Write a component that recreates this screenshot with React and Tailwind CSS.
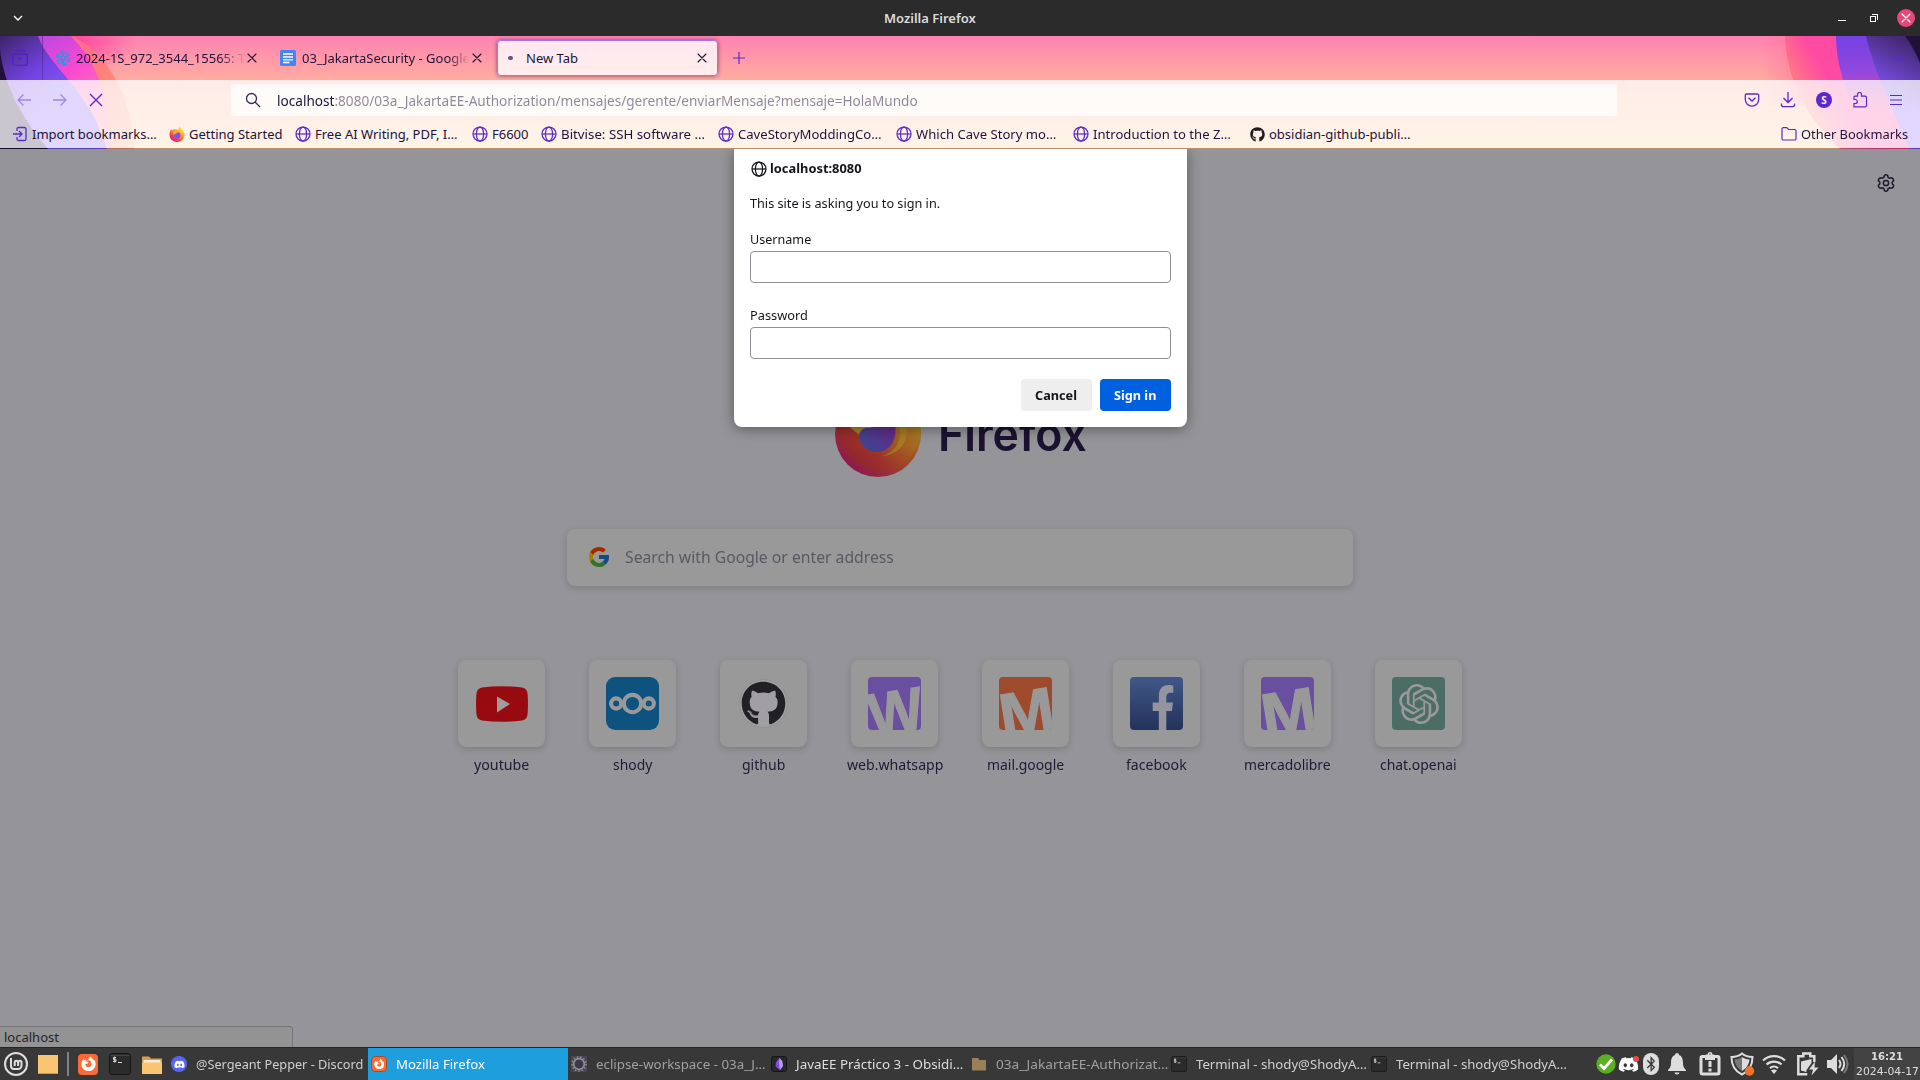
import { useLayoutEffect, useRef, useState } from "react";
import { FaGithub, FaDiscord, FaFacebookF, FaFirefoxBrowser, FaBluetoothB } from "react-icons/fa";
import { FcGoogle } from "react-icons/fc";
import { SiOpenai } from "react-icons/si";

// One line of text condensed or widened to take exactly w pixels.
function Fit({ w, className = "", children }) {
  const ref = useRef(null);
  const [scale, setScale] = useState(1);
  useLayoutEffect(() => {
    setScale(w / ref.current.offsetWidth);
  }, [w]);
  return (
    <span className={"block shrink-0 whitespace-nowrap " + className} style={{ width: w }}>
      <span ref={ref} className="inline-block origin-left" style={{ transform: `scaleX(${scale})` }}>
        {children}
      </span>
    </span>
  );
}

function Globe({ className = "" }) {
  return (
    <svg viewBox="0 0 16 16" className={"size-4 shrink-0 " + className} fill="none" stroke="currentColor" strokeWidth="1.25">
      <circle cx="8" cy="8" r="7" />
      <ellipse cx="8" cy="8" rx="3.6" ry="7" />
      <path d="M1 8h14" />
    </svg>
  );
}

function Cross({ className = "" }) {
  return (
    <svg viewBox="0 0 10 10" className={"shrink-0 " + className} fill="none" stroke="currentColor" strokeWidth="1.1" strokeLinecap="round">
      <path d="M1 1l8 8M9 1l-8 8" />
    </svg>
  );
}

function FirefoxLogo({ className = "" }) {
  return (
    <svg viewBox="0 0 32 32" className={"shrink-0 " + className}>
      <defs>
        <linearGradient id="fx-body" x1="0.85" y1="0.05" x2="0.2" y2="0.95">
          <stop offset="0.05" stopColor="#fff44f" />
          <stop offset="0.4" stopColor="#ffa12c" />
          <stop offset="0.7" stopColor="#ff4a3a" />
          <stop offset="1" stopColor="#e31587" />
        </linearGradient>
        <linearGradient id="fx-core" x1="1" y1="0" x2="0" y2="1">
          <stop offset="0" stopColor="#b833e1" />
          <stop offset="1" stopColor="#5b6df8" />
        </linearGradient>
      </defs>
      <path fill="url(#fx-body)" d="M20 0c3 2 4 4 4.500 6 4.500 3 7 7.500 6.500 13C30 27 23.500 32 16 32S1 26 1 17.500C1 12 3 8 5 5.500c0 1.500.3 2.500 1 3.500 2-2 4-2.500 6-2.500 3 0 5 .5 6 1.500 1.500-2.500 2-5 2-8z" />
      <path fill="url(#fx-core)" d="M9.500 14c2 .5 4.500.5 6-1.500 3-1.500 7.500 1.500 7.500 6 0 4-3 6.800-7 6.800s-7-3-7-6.800c0-2 0-3 .5-4.500z" />
      <path fill="#ffb52e" d="M7 13c2-3 5-3 8-2.500l3 2.500c-3 0-3 2-5 2.500-2 .5-3 1-3.500 2.500z" />
    </svg>
  );
}

// The large, dimmed logo of the new tab page; 86 px wide disc with the globe in its middle.
function PageLogo() {
  return (
    <svg viewBox="0 0 86 86" className="size-[86px] shrink-0">
      <defs>
        <linearGradient id="pl-rim" x1="1" y1="0.1" x2="0.2" y2="1">
          <stop offset="0.1" stopColor="#a18c2f" />
          <stop offset="0.45" stopColor="#a4521f" />
          <stop offset="1" stopColor="#8c1150" />
        </linearGradient>
        <linearGradient id="pl-fur" x1="0.95" y1="0.2" x2="0.25" y2="0.85">
          <stop offset="0" stopColor="#a5902e" />
          <stop offset="0.4" stopColor="#a4661f" />
          <stop offset="0.8" stopColor="#9c3229" />
          <stop offset="1" stopColor="#93272f" />
        </linearGradient>
        <linearGradient id="pl-core" x1="1" y1="0.2" x2="0.2" y2="0.9">
          <stop offset="0" stopColor="#6b2585" />
          <stop offset="1" stopColor="#3e4590" />
        </linearGradient>
      </defs>
      <circle cx="43" cy="43" r="43" fill="url(#pl-rim)" />
      <path fill="url(#pl-fur)" d="M1 30C3 60 22 79 45 79S84 62 86 40C84 15 66 0 43 0S4 14 1 30z" />
      <path fill="#a88425" fillOpacity="0.7" d="M61 28c8 12 5 32-14 37 16-1 26-13 25-27-1-5-4-9-11-10z" />
      <path fill="url(#pl-core)" d="M24 44c0-4 2-7 5-7 6-1 10-3 14-10h15c3 7 3 13 2 18-2 10-9 16-18 16S24 54 24 44z" />
      <path fill="#a5832a" d="M12 32h32c-4 4-7 5-13 5-4 1-6 3-7 7-3-4-8-5-12-12z" />
    </svg>
  );
}

function ThemeArt() {
  return (
    <div className="absolute inset-0 flex justify-between overflow-hidden bg-linear-to-b from-[#ff82b1] via-[#ffad9f] via-40% to-[#ffcd98]">
      <svg width="150" height="113" viewBox="0 36 150 113">
        <defs>
          <linearGradient id="l-orange" x1="0" y1="0" x2="1" y2="1">
            <stop offset="0" stopColor="#ff4fa3" />
            <stop offset="0.6" stopColor="#ff8675" />
            <stop offset="1" stopColor="#ffa27e" />
          </linearGradient>
          <linearGradient id="l-pink" x1="0" y1="0" x2="0.6" y2="1">
            <stop offset="0" stopColor="#9a49e8" />
            <stop offset="0.5" stopColor="#fa48d2" />
            <stop offset="1" stopColor="#ff8f9c" />
          </linearGradient>
          <linearGradient id="l-purple" x1="0" y1="0" x2="0.45" y2="0.6">
            <stop offset="0" stopColor="#3c2467" />
            <stop offset="0.6" stopColor="#7442e2" />
            <stop offset="1" stopColor="#8157f2" />
          </linearGradient>
          <radialGradient id="l-glow">
            <stop offset="0" stopColor="#ff4ba0" />
            <stop offset="1" stopColor="#ff4ba0" stopOpacity="0" />
          </radialGradient>
        </defs>
        <ellipse cx="80" cy="40" rx="56" ry="34" fill="url(#l-glow)" />
        <path fill="url(#l-orange)" d="M0 36H72C102 50 132 90 134 149H0z" />
        <path fill="url(#l-pink)" d="M0 36H71C94 60 112 96 110 149H0z" />
        <path fill="url(#l-purple)" d="M0 36H38C48 66 90 90 107 149H0z" />
        <path fill="#21113a" d="M0 50C5 90 24 120 48 149H0z" />
      </svg>
      <svg width="160" height="113" viewBox="1760 36 160 113">
        <defs>
          <linearGradient id="r-orange" gradientUnits="userSpaceOnUse" x1="1785" y1="90" x2="1832" y2="62">
            <stop offset="0" stopColor="#ff8b78" />
            <stop offset="0.8" stopColor="#ff4aa3" />
          </linearGradient>
          <linearGradient id="r-purple" gradientUnits="userSpaceOnUse" x1="1850" y1="36" x2="1852" y2="110">
            <stop offset="0" stopColor="#7441e5" />
            <stop offset="0.5" stopColor="#9348dd" />
            <stop offset="1" stopColor="#ff4a9e" />
          </linearGradient>
          <linearGradient id="r-dark" gradientUnits="userSpaceOnUse" x1="1880" y1="92" x2="1908" y2="42">
            <stop offset="0" stopColor="#8053f5" />
            <stop offset="1" stopColor="#432873" />
          </linearGradient>
          <linearGradient id="r-haze">
            <stop offset="0" stopColor="#ff6d9b" stopOpacity="0" />
            <stop offset="1" stopColor="#ff6d9b" stopOpacity="0.6" />
          </linearGradient>
        </defs>
        <path fill="url(#r-haze)" d="M1760 36h28v30l16 40h-44z" />
        <path fill="url(#r-orange)" d="M1785 36C1786 80 1808 120 1840 149H1920V36z" />
        <path fill="url(#r-purple)" d="M1836 36C1836 84 1862 120 1878 149H1920V36z" />
        <path fill="url(#r-dark)" d="M1866 36C1872 64 1890 104 1909 149H1920V36z" />
        <path fill="#21113a" d="M1905 36Q1914 48 1920 63V36z" />
      </svg>
    </div>
  );
}

function TitleBar() {
  return (
    <div className="flex h-9 items-center bg-[#2b2b2b] text-white">
      <svg viewBox="0 0 10 8" className="ml-[13px] h-2 w-2.5" fill="none" stroke="currentColor" strokeWidth="1.4"><path d="M1 2l4 4 4-4" /></svg>
      <Fit w={92} className="ml-[861px] pt-px text-[13px] font-semibold text-[#dcdcdc]">Mozilla Firefox</Fit>
      <div className="ml-auto flex items-center pr-[5px]">
        <span className="mt-[5px] h-px w-2 bg-white" />
        <svg viewBox="0 0 8 8" className="ml-6 size-2" fill="none" stroke="currentColor" shapeRendering="crispEdges"><path d="M.5 2.500h5v5h-5zM2 .5h5.500V6" /></svg>
        <span className="ml-[19px] flex size-[18px] items-center justify-center rounded-full bg-[#e7477f]"><Cross className="size-[10px]" /></span>
      </div>
    </div>
  );
}

function TabStrip() {
  return (
    <div className="relative flex h-11 items-center text-[13px] text-[#20123a]">
      <svg viewBox="0 0 16 16" className="ml-3 size-4 text-[#4f22c4]" fill="none" stroke="currentColor" strokeWidth="1.3"><path d="M2.500.8h11M2.500 4h11a1.700 1.700 0 0 1 1.700 1.700v7.600a2 2 0 0 1-2 2H2.800a2 2 0 0 1-2-2V5.700A1.700 1.700 0 0 1 2.500 4z" /><path strokeWidth="2" d="M6 8.500h4" /></svg>
      <span className="ml-[14px] h-11 w-px bg-[#43257f]/50" />
      <svg viewBox="0 0 16 16" className="ml-3 size-4 text-[#1f9be0]" fill="none" stroke="currentColor" strokeWidth="1.200">
        <circle cx="8" cy="8" r="2" /><circle cx="8" cy="8" r="6.800" strokeDasharray="4.500 2.600" />
        <path d="M8 1v5M8 10v5M2 4.500l4.300 2.400M9.800 9.100L14 11.500M2 11.500l4.300-2.400M9.800 6.900L14 4.500M5.500 2.800L8 4.500l2.500-1.700M5.500 13.200L8 11.500l2.500 1.700M2 8l2-1.500M14 8l-2-1.500" />
      </svg>
      <div className="ml-[5px] w-[169px] overflow-hidden mask-r-from-85% mask-r-to-100% pt-px"><Fit w={169}>2024-1S_972_3544_15565: T</Fit></div>
      <Cross className="ml-[2px] size-[10px]" />
      <svg viewBox="0 0 16 16" className="ml-[23px] size-4"><rect width="16" height="16" rx="1.500" fill="#4285f4" /><path d="M3 4h10M3 7h10M3 9.800h10M3 12.500h6.500" stroke="#fff" strokeWidth="1.300" /></svg>
      <div className="ml-1.5 w-[167px] overflow-hidden mask-r-from-88% mask-r-to-100% pt-px"><Fit w={168}>03_JakartaSecurity - Google</Fit></div>
      <Cross className="ml-[3px] size-[10px]" />
      <div className="ml-[15px] flex h-9 w-[221px] items-center rounded border border-[#a672f5] bg-white/80 shadow-[0_0_4px_rgba(70,20,60,0.6)]">
        <span className="ml-2.5 h-1 w-[5px] rounded-full bg-[#66557a]" />
        <Fit w={52} className="ml-[13px] pt-px">New Tab</Fit>
        <Cross className="mr-[10px] ml-auto size-[10px]" />
      </div>
      <svg viewBox="0 0 12 12" className="ml-[15px] size-3 text-[#592acb]" fill="none" stroke="currentColor" strokeWidth="1.200"><path d="M6 0v12M0 6h12" /></svg>
      <svg viewBox="0 0 12 8" className="mr-[15px] ml-auto h-2 w-3 text-[#592acb]" fill="none" stroke="currentColor" strokeWidth="1.300"><path d="M1 1.500l5 5 5-5" /></svg>
    </div>
  );
}

function NavBar() {
  return (
    <div className="flex h-10 items-center text-[#592acb]">
      <svg viewBox="0 0 14 12" className="ml-[17px] h-3 w-[14px] opacity-45" fill="none" stroke="currentColor" strokeWidth="1.300"><path d="M14 6H1M6.500.5L1 6l5.500 5.500" /></svg>
      <svg viewBox="0 0 14 12" className="ml-[22px] h-3 w-[14px] opacity-45" fill="none" stroke="currentColor" strokeWidth="1.300"><path d="M0 6h13M7.500.5L13 6l-5.500 5.500" /></svg>
      <svg viewBox="0 0 14 14" className="ml-[22px] size-[14px]" fill="none" stroke="currentColor" strokeWidth="1.400"><path d="M1 1l12 12M13 1L1 13" /></svg>
      <div className="ml-[128px] flex h-8 w-[1386px] items-center rounded bg-white/75 text-[14px]">
        <svg viewBox="0 0 16 16" className="ml-[14px] size-4 text-[#3a2a55]" fill="none" stroke="currentColor" strokeWidth="1.300"><circle cx="6.500" cy="6.500" r="5" /><path d="M10 10l5 5" /></svg>
        <Fit w={641} className="ml-4 text-[#20123a]/50"><span className="text-[#20123a]">localhost</span>:8080/03a_JakartaEE-Authorization/mensajes/gerente/enviarMensaje?mensaje=HolaMundo</Fit>
      </div>
      <svg viewBox="0 0 16 16" className="ml-[127px] size-4" fill="none" stroke="currentColor" strokeWidth="1.300"><path d="M2.500 2h11A1.200 1.200 0 0 1 14.700 3.200V7.500a6.700 6.700 0 0 1-13.400 0V3.200A1.200 1.200 0 0 1 2.500 2z" /><path d="M4.500 5.700L8 9l3.500-3.300" /></svg>
      <svg viewBox="0 0 16 16" className="ml-5 size-4" fill="none" stroke="currentColor" strokeWidth="1.300"><path d="M8 0v10.500M3.500 6L8 10.500 12.500 6M1.500 11.500V13A1.700 1.700 0 0 0 3.200 14.700h9.600A1.700 1.700 0 0 0 14.500 13v-1.500" /></svg>
      <span className="ml-5 flex size-4 items-center justify-center rounded-full bg-[#592acb] text-[10px] font-bold text-[#ffe5f0]">S</span>
      <svg viewBox="0 0 16 16" className="ml-5 size-4" fill="none" stroke="currentColor" strokeWidth="1.200"><path d="M2 7V5.200A1 1 0 0 1 3 4.200H5.500V2.500a2 2 0 0 1 4 0v1.700h3.700a1.300 1.300 0 0 1 1.300 1.300v8a1.300 1.300 0 0 1-1.300 1.300H2V11.500h1.300a2 2 0 0 0 0-4H2z" /></svg>
      <svg viewBox="0 0 12 12" className="ml-[22px] size-3" fill="none" stroke="currentColor" strokeWidth="1.200"><path d="M0 1.500h12M0 6h12M0 10.500h12" /></svg>
    </div>
  );
}

function Bookmark({ icon, w, gap = "ml-[14px]", children }) {
  return (
    <div className={"flex shrink-0 items-center gap-1 " + gap}>
      {icon}
      <Fit w={w} className="pt-px text-[#20123a]">{children}</Fit>
    </div>
  );
}

function BookmarkBar() {
  return (
    <div className="flex h-7 items-center text-[13px] text-[#592acb]">
      <Bookmark w={125} gap="ml-3" icon={<svg viewBox="0 0 16 16" className="size-4" fill="none" stroke="currentColor" strokeWidth="1.300"><path d="M1 8h9M7 5l3 3-3 3M5 5V3a1.500 1.500 0 0 1 1.500-1.500h6A1.500 1.500 0 0 1 14 3v10a1.500 1.500 0 0 1-1.500 1.500h-6A1.500 1.500 0 0 1 5 13v-2" /></svg>}>Import bookmarks…</Bookmark>
      <Bookmark w={93} gap="ml-3" icon={<FirefoxLogo className="size-4" />}>Getting Started</Bookmark>
      <Bookmark w={143} gap="ml-[13px]" icon={<Globe />}>Free AI Writing, PDF, I…</Bookmark>
      <Bookmark w={37} icon={<Globe />}>F6600</Bookmark>
      <Bookmark w={144} gap="ml-[12px]" icon={<Globe />}>Bitvise: SSH software …</Bookmark>
      <Bookmark w={144} gap="ml-[13px]" icon={<Globe />}>CaveStoryModdingCo…</Bookmark>
      <Bookmark w={140} icon={<Globe />}>Which Cave Story mo…</Bookmark>
      <Bookmark w={138} gap="ml-[17px]" icon={<Globe />}>Introduction to the Z…</Bookmark>
      <Bookmark w={142} gap="ml-[19px]" icon={<FaGithub className="size-[15px] text-[#1b1f23]" />}>obsidian-github-publi…</Bookmark>
      <Bookmark w={107} gap="ml-auto mr-3" icon={<svg viewBox="0 0 16 16" className="size-4" fill="none" stroke="currentColor" strokeWidth="1.200"><path d="M1 3A1.300 1.300 0 0 1 2.300 1.700h3.500L7.500 3.500h6.200A1.300 1.300 0 0 1 15 4.800v7.900a1.300 1.300 0 0 1-1.300 1.300H2.300A1.300 1.300 0 0 1 1 12.700z" /></svg>}>Other Bookmarks</Bookmark>
    </div>
  );
}

function SignInDialog() {
  return (
    <div className="absolute top-0 left-[734px] h-[278px] w-[453px] rounded-b-lg bg-white pr-4 pl-[15.5px] pt-3 text-[13px] text-[#15141a] shadow-[0_2px_14px_rgba(0,0,0,0.4)]">
      <div className="flex h-4 items-center gap-[3px] pl-px">
        <Globe />
        <Fit w={92} className="font-bold">localhost:8080</Fit>
      </div>
      <div className="mt-[17px] flex h-5 items-center"><Fit w={190}>This site is asking you to sign in.</Fit></div>
      <div className="mt-4 flex h-5 items-center"><Fit w={61}>Username</Fit></div>
      <div className="mt-px h-8 rounded border border-[#8f8f96]" />
      <div className="mt-[23px] flex h-5 items-center"><Fit w={58}>Password</Fit></div>
      <div className="mt-px h-8 rounded border border-[#8f8f96]" />
      <div className="mt-5 flex justify-end gap-2 font-bold">
        <div className="flex h-8 w-[71px] items-center justify-center rounded bg-[#eeeeee] pt-px pr-px"><Fit w={42}>Cancel</Fit></div>
        <div className="flex h-8 w-[71px] items-center justify-center rounded bg-[#0060df] pt-px pr-px text-[#fbfbfe]"><Fit w={42}>Sign in</Fit></div>
      </div>
    </div>
  );
}

function LetterIcon({ letter, className }) {
  return (
    <svg viewBox="0 0 53 53" className={"size-[53px] overflow-hidden rounded " + className}>
      <text x="27.500" y="56" textAnchor="middle" transform="rotate(-9 27 34)" fontFamily="Liberation Sans" fontWeight="700" fontSize="61" textLength="55" lengthAdjust="spacingAndGlyphs" fill="#999999" stroke="#999999" strokeWidth="1.200">{letter}</text>
    </svg>
  );
}

const SITES = [
  { name: "youtube", w: 55, icon: <svg viewBox="0 0 52 36" className="h-9 w-[52px]"><path fill="#970b10" d="M6 1.500Q26-1 46 1.500q5 .8 5.500 6 1 10.500 0 21-.5 5.200-5.500 6-20 2.500-40 0-5-.8-5.500-6-1-10.500 0-21 .5-5.200 5.500-6z" /><path fill="#a09c9c" d="M21 10.500v16L34 18z" /></svg> },
  { name: "shody", w: 39, icon: <svg viewBox="0 0 52 52" className="size-[53px]"><rect width="52" height="52" rx="9" fill="#0e5380" /><g fill="none" stroke="#999" strokeWidth="4"><circle cx="26" cy="26" r="8.500" /><circle cx="10" cy="26" r="5" /><circle cx="42" cy="26" r="5" /></g></svg> },
  { name: "github", w: 43, icon: <div className="rounded-full border border-[#919094] bg-[#a19fa3] p-px"><FaGithub className="size-[45px] text-[#212025]" /></div> },
  { name: "web.whatsapp", w: 96, icon: <LetterIcon letter="W" className="bg-[#6a4fa0]" /> },
  { name: "mail.google", w: 77, icon: <LetterIcon letter="M" className="bg-[#9e4b2d]" /> },
  { name: "facebook", w: 61, icon: <div className="flex size-[53px] items-end justify-end overflow-hidden rounded bg-linear-to-b from-[#425788] to-[#22335a] pr-2"><FaFacebookF className="-mb-px h-[46px] w-6 text-[#93949d]" preserveAspectRatio="none" /></div> },
  { name: "mercadolibre", w: 87, icon: <LetterIcon letter="M" className="bg-[#6a4fa0]" /> },
  { name: "chat.openai", w: 77, icon: <div className="flex size-[53px] items-center justify-center rounded bg-[#4c6c66]"><SiOpenai className="size-10 text-[#999999]" /></div> },
];

function NewTabPage() {
  return (
    <div className="relative h-[898px] overflow-hidden bg-[#959498]">
      <div className="flex justify-end pt-[25px] pr-[25px] text-[#1e1a2c]">
        <svg viewBox="0 0 18 18" className="size-[18px]" fill="none" stroke="currentColor" strokeWidth="1.500" strokeLinejoin="round"><path d="M7.500 1.300Q9 .4 10.500 1.300L11.200 3.500 12.600 4.200 15 3.800Q16.700 4.800 16.700 6.500L15.200 8.200V9.800L16.700 11.500Q16.700 13.200 15 14.200L12.600 13.800 11.200 14.500 10.500 16.700Q9 17.600 7.500 16.700L6.800 14.500 5.400 13.800 3 14.200Q1.300 13.200 1.300 11.500L2.800 9.800V8.200L1.300 6.500Q1.300 4.800 3 3.800L5.400 4.200 6.800 3.500z" /><circle cx="9" cy="9" r="2.600" /></svg>
      </div>
      <div className="mt-[195px] ml-[835px] flex h-[90px] items-end">
        <PageLogo />
        <Fit w={149} className="mb-[19px] ml-[17px] font-[Inter] text-[47px] leading-[48px] font-semibold text-[#1b1230]">Firefox</Fit>
      </div>
      <div className="mt-[52px] ml-[567px] flex h-[57px] w-[786px] items-center rounded-lg bg-[#999999] shadow-[0_2px_6px_rgba(40,38,50,0.22)]">
        <FcGoogle className="mb-px ml-[20px] size-6 brightness-65" />
        <Fit w={269} className="mb-0.5 ml-[14px] text-[17px] text-[#5b5766]">Search with Google or enter address</Fit>
      </div>
      <div className="mt-[74px] flex justify-center gap-[44px]">
        {SITES.map((s) => (
          <div key={s.name} className="flex w-[87px] flex-col items-center">
            <div className="flex size-[87px] items-center justify-center rounded-lg bg-[#999999] shadow-[0_2px_6px_rgba(40,38,50,0.22)]">{s.icon}</div>
            <Fit w={s.w} className="mt-1.5 text-[15px] leading-[22px] text-[#211a36]">{s.name}</Fit>
          </div>
        ))}
      </div>
      <SignInDialog />
      <div className="absolute bottom-0 left-0 flex h-[21px] w-[293px] items-center rounded-tr border-t border-r border-[#77767a] bg-[#949394] pt-0.5 pl-1 text-[13px] text-[#252328]">
        <Fit w={55}>localhost</Fit>
      </div>
    </div>
  );
}

function TerminalIcon({ className }) {
  return (
    <svg viewBox="0 0 22 22" className={"shrink-0 " + className}><rect x=".5" y=".5" width="21" height="21" rx="3" fill="#2b2b2b" stroke="#151515" /><path d="M1.500 2.500h19" stroke="#444" /><path d="M7 4.500H4.500v2H7v2H4M5.700 3.500v6M9 9.500h4" fill="none" stroke="#ddd" /></svg>
  );
}

function FirefoxTile({ className }) {
  return <span className={"flex shrink-0 items-center justify-center rounded-sm bg-[#fa6a35] text-white " + className}><FaFirefoxBrowser className="size-3/4" /></span>;
}

function Task({ icon, w, className = "text-[#d0d0d0]", children }) {
  return (
    <div className={"flex h-full w-[200px] shrink-0 items-center gap-[9px] pl-[3px] " + className}>
      {icon}
      <Fit w={w} className="pt-px">{children}</Fit>
    </div>
  );
}

function Tray() {
  return (
    <div className="ml-auto flex h-full shrink-0 items-center text-[#dddddd]">
      <svg viewBox="0 0 20 20" className="size-5"><circle cx="10" cy="10" r="9.700" fill="#5ab021" /><path d="M4 10.500l4 4 8-9" fill="none" stroke="#fff" strokeWidth="2.700" /></svg>
      <div className="relative ml-0.5 flex size-[21px] items-center"><FaDiscord className="size-[21px] text-white" /><span className="absolute top-0.5 right-0 size-1.5 rounded-full bg-[#f04848]" /></div>
      <span className="ml-[4px] flex h-[22px] w-4 items-center justify-center rounded-full bg-[#dddddd]"><FaBluetoothB className="size-4 text-[#383838]" /></span>
      <svg viewBox="0 0 20 22" className="ml-[8px] h-[22px] w-5" fill="currentColor"><path d="M10 0a2 2 0 0 1 2 2c3 1 4 4 4 8 0 4 1.500 5.500 3 7v1H1v-1c1.500-1.500 3-3 3-7 0-4 1-7 4-8a2 2 0 0 1 2-2zM7.500 19.500h5a2.500 2 0 0 1-5 0z" /></svg>
      <svg viewBox="0 0 22 24" className="ml-[12px] h-6 w-[22px]" fill="none" stroke="currentColor"><rect x="2" y="4.500" width="18" height="17.500" rx="1.500" strokeWidth="3" /><path d="M6 6.500h10M7 4h8" strokeWidth="3" /><circle cx="11" cy="2.500" r="1.700" strokeWidth="1.500" /><path d="M11 9v6M11 16.500v3" strokeWidth="3" /></svg>
      <svg viewBox="0 0 25 24" className="ml-[9px] h-6 w-[25px]"><path d="M12 1.500C9 4 5 5 1.500 5c0 8 3 14 10.500 17.500C19.500 19 22.500 13 22.500 5 19 5 15 4 12 1.500z" fill="none" stroke="#ddd" strokeWidth="2" /><path d="M12 5v14C7 16 5 12 4.500 7.500 7.500 7.500 10 6.500 12 5z" fill="#777" /><path d="M12 5v14c5-3 7-7 7.500-11.500C16.500 7.500 14 6.500 12 5z" fill="#ddd" /><circle cx="19.500" cy="19" r="4.700" fill="#f37329" /></svg>
      <svg viewBox="0 0 24 20" className="ml-[7px] h-5 w-6" fill="none" stroke="currentColor" strokeWidth="2.300"><path d="M1 6.500a16 16 0 0 1 22 0M4.500 10.500a11 11 0 0 1 15 0M8 14.200a6 6 0 0 1 8 0" /><path d="M12 20l-3-3.500q3-2 6 0z" fill="currentColor" stroke="none" /></svg>
      <svg viewBox="0 0 22 24" className="ml-[11px] h-6 w-[22px]" fill="none" stroke="currentColor" strokeWidth="2.500"><path d="M17.300 10V4.200h-4V1.500h-7v2.700h-5v18h9" /><path d="M4 18.500V9.500L14.500 7v4L9.500 18v2z" fill="currentColor" stroke="none" /><path d="M18 9.500l-6 8h4l-1.500 6 7-8h-4z" fill="currentColor" stroke="none" /></svg>
      <svg viewBox="0 0 24 22" className="ml-[7px] h-[22px] w-6" fill="none" stroke="currentColor" strokeWidth="2"><path d="M1 7h4l6-6v20l-6-6H1z" fill="currentColor" stroke="none" /><path d="M13 7q3 4 0 8M15.500 4q5.500 7 0 14" /><path d="M18 2q7 9 0 18" stroke="#777" /></svg>
      <div className="ml-[4px] flex h-full w-[66px] flex-col items-center justify-center bg-[#434343] font-['DejaVu_Sans'] text-[11px] leading-[15px]">
        <Fit w={32} className="font-bold">16:21</Fit>
        <Fit w={63}>2024-04-17</Fit>
      </div>
    </div>
  );
}

function Taskbar() {
  return (
    <div className="flex h-[33px] items-center border-t border-[#252525] bg-[#383838] text-[13px]">
      <svg viewBox="0 0 24 24" className="ml-1 size-6 shrink-0" fill="none" stroke="#dedede" strokeWidth="2"><circle cx="12" cy="12" r="11" /><path d="M7 6v8a3 3 0 0 0 3 3h4a3.500 3.500 0 0 0 3.500-3.500V10.500a1.700 1.700 0 0 0-3.400 0V14M14.100 10.500a1.700 1.700 0 0 0-3.400 0V14" /></svg>
      <span className="ml-[10px] h-[19px] w-5 border-b border-[#c89a50] bg-[#f9c570]" />
      <span className="ml-[9px] h-6 w-0.5 bg-[#828282]" />
      <FirefoxTile className="ml-[9px] h-[21px] w-5" />
      <TerminalIcon className="ml-[11px] size-[22px]" />
      <svg viewBox="0 0 20 20" className="ml-[11px] size-5"><path d="M0 2.500h7l2 2h11V20H0z" fill="#d69f4d" /><path d="M1.500 6h17v3h-17z" fill="#f5ead5" /><path d="M0 8.500h20V20H0z" fill="#f9c570" /></svg>
      <div className="ml-[6px] flex h-full shrink-0">
        <Task w={167} icon={<span className="flex size-4 items-center justify-center rounded-full bg-[#5865f2] text-white"><FaDiscord className="size-[11px]" /></span>}>@Sergeant Pepper - Discord</Task>
        <Task w={89} className="bg-[#1f9ede] text-white" icon={<FirefoxTile className="size-4 border border-[#a34d2e]" />}>Mozilla Firefox</Task>
        <Task w={169} className="text-[#a0a0a0]" icon={<svg viewBox="0 0 16 16" className="size-4"><rect width="16" height="16" fill="#4b4458" /><circle cx="8" cy="8" r="5.300" fill="#3c3847" stroke="#929292" strokeWidth="1.700" /><circle cx="8" cy="8" r="7" fill="none" stroke="#929292" strokeWidth="1.500" strokeDasharray="1.500 1.900" /></svg>}>eclipse-workspace - 03a_J…</Task>
        <Task w={167} className="text-[#dedede]" icon={<svg viewBox="0 0 16 16" className="size-4"><rect x=".5" y=".5" width="15" height="15" rx="2" fill="#272727" stroke="#171717" /><path d="M8.500 2L5 6l-.5 4.500L9 14l3-4-.8-5z" fill="#7b4de0" /><path d="M8.500 2L8 8l1 6 3-4-.8-5z" fill="#b49cf7" /></svg>}>JavaEE Práctico 3 - Obsidi…</Task>
        <Task w={172} className="text-[#a0a0a0]" icon={<svg viewBox="0 0 16 16" className="size-4"><path d="M1 2h6l1.500 2H15v10.500H1z" fill="#9a8057" /></svg>}>03a_JakartaEE-Authorizat…</Task>
        <Task w={171} icon={<TerminalIcon className="size-4" />}>Terminal - shody@ShodyA…</Task>
        <Task w={171} icon={<TerminalIcon className="size-4" />}>Terminal - shody@ShodyA…</Task>
      </div>
      <Tray />
    </div>
  );
}

export default function App() {
  return (
    <div className="h-[1080px] w-[1920px] overflow-hidden font-['Noto_Sans',sans-serif]">
      <TitleBar />
      <header className="relative h-[113px]">
        <ThemeArt />
        <TabStrip />
        <div className="relative h-[68px] bg-white/76">
          <NavBar />
          <BookmarkBar />
        </div>
        <div className="relative h-px bg-black/28" />
      </header>
      <NewTabPage />
      <Taskbar />
    </div>
  );
}
